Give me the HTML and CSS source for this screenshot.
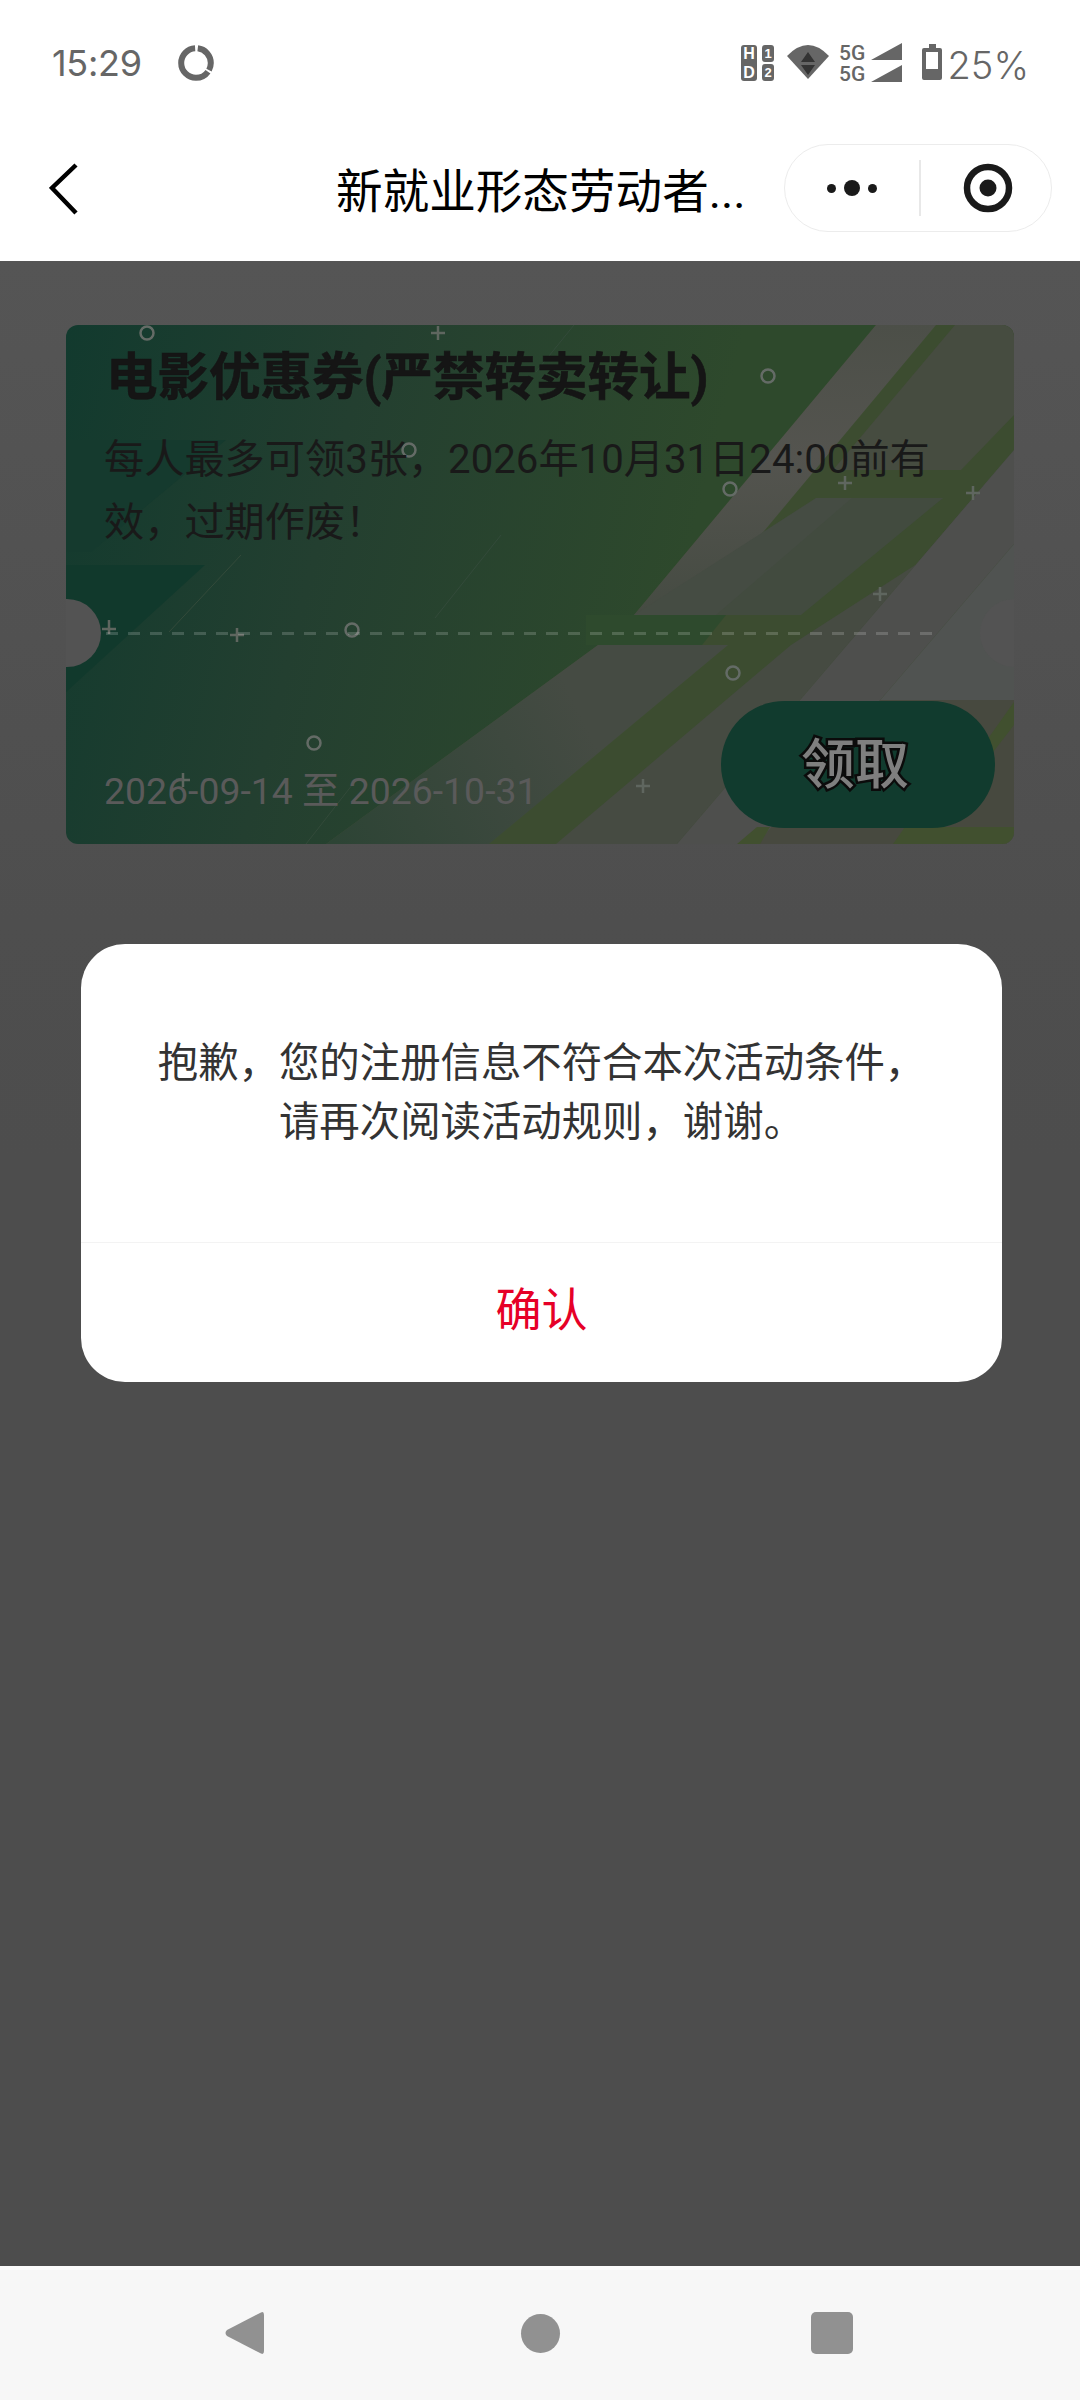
FILE: index.html
```html
<!DOCTYPE html>
<html lang="zh-CN">
<head>
<meta charset="utf-8">
<title>新就业形态劳动者</title>
<link rel="stylesheet" href="styles.css">
</head>
<body>
<div class="app">
  <header class="status">
    <div class="status-left">
      <span class="time">15:29</span>
      <svg class="spinner" viewBox="0 0 40 40"><circle cx="20" cy="20" r="14.8" pathLength="100" stroke-dasharray="64 3 31 2" stroke-dashoffset="-10"/></svg>
    </div>
    <div class="status-right">
      <svg class="ic ic-hd" viewBox="741 43 35 40">
        <rect class="fill" x="742" y="45" width="16" height="36" rx="3"/>
        <rect class="fill" x="763" y="45" width="12" height="17" rx="3"/>
        <rect class="fill" x="763" y="64" width="12" height="17" rx="3"/>
        <text class="glyph" x="750" y="59" font-size="16">H</text>
        <text class="glyph" x="750" y="78" font-size="16">D</text>
        <text class="glyph" x="769" y="58" font-size="13">1</text>
        <text class="glyph" x="769" y="77" font-size="13">2</text>
      </svg>
      <svg class="ic ic-wifi" viewBox="788 43 42 40">
        <path class="fill" d="M809 79 L788 56 Q809 34 830 56 Z"/>
        <path class="dark" d="M809 52 L802 62 H816 Z M809 75 L802 65 H816 Z"/>
      </svg>
      <svg class="ic-sig" viewBox="840 37 64 52">
        <text class="net" x="840" y="60">5G</text>
        <text class="net" x="840" y="81">5G</text>
        <path class="fill" d="M872 60 L903 43 V60 Z M872 82 L903 65 V82 Z"/>
      </svg>
      <svg class="ic ic-bat" viewBox="923 43 21 40">
        <path class="fill" d="M930 44 H937 V48 H941 Q943 48 943 50 V78 Q943 80 941 80 H925 Q923 80 923 78 V50 Q923 48 925 48 H930 Z"/>
        <rect class="hole" x="927" y="52" width="12" height="17"/>
      </svg>
      <span class="pct">25%</span>
    </div>
  </header>

  <nav class="nav">
    <svg class="back" viewBox="0 0 30 52"><path d="M27 2 L3 25 L27 50"/></svg>
    <div class="title">新就业形态劳动者...</div>
    <div class="capsule">
      <div class="cap-side cap-side-left">
        <span class="dot"></span><span class="dot dot-big"></span><span class="dot"></span>
      </div>
      <div class="cap-sep"></div>
      <div class="cap-side cap-side-right">
        <svg class="target" viewBox="0 0 50 50"><circle class="ring" cx="25" cy="25" r="21"/><circle class="core" cx="25" cy="25" r="8.5"/></svg>
      </div>
    </div>
  </nav>

  <main class="page">
    <section class="coupon">
      <svg class="coupon-bg" viewBox="0 0 948 519" preserveAspectRatio="none">
        <defs>
          <linearGradient id="base" gradientUnits="userSpaceOnUse" x1="0" y1="0" x2="640" y2="160">
            <stop offset="0" stop-color="#123a2e"/>
            <stop offset="0.45" stop-color="#233f30"/>
            <stop offset="1" stop-color="#2e492c"/>
          </linearGradient>
          <linearGradient id="lowerBlock" gradientUnits="userSpaceOnUse" x1="270" y1="519" x2="520" y2="400">
            <stop offset="0" stop-color="#2d4435"/>
            <stop offset="1" stop-color="#454b43"/>
          </linearGradient>
          <linearGradient id="topStripe" gradientUnits="userSpaceOnUse" x1="0" y1="0" x2="0" y2="290">
            <stop offset="0" stop-color="#4c4f48"/>
            <stop offset="0.45" stop-color="#54544f"/>
            <stop offset="1" stop-color="#454b42"/>
          </linearGradient>
        </defs>
        <rect width="948" height="519" fill="url(#base)"/>
        <path fill="#153a2e" d="M0 115 H160 L25 227 H0 Z"/>
        <path fill="#11392c" d="M0 240 H139 L0 367 Z"/>
        <path fill="#3c4c30" d="M810 0 H948 V519 H260 L532 320 L568 290 Z"/>
        <path fill="#2e4a2d" d="M520 290 H660 L636 320 H520 Z"/>
        <path fill="url(#topStripe)" d="M810 0 H870 L628 290 H568 Z"/>
        <path fill="#464c40" d="M889 0 H948 V90 L895 145 H767 Z"/>
        <path fill="#454c43" d="M750 173 H877 L701 290 H568 Z"/>
        <path fill="#424b3f" d="M786 173 H877 L735 290 H650 Z"/>
        <path fill="url(#lowerBlock)" d="M532 320 H662 L423 519 H260 Z"/>
        <path fill="#464b42" d="M490 519 H611 L948 125 L857 235 L725 320 Z"/>
        <path fill="#4e4f4d" d="M611 519 H691 L948 219 V125 Z"/>
        <path fill="#505351" d="M691 519 L948 219 V519 Z"/>
        <path fill="#47493f" d="M691 519 H948 V375 H814 Z"/>
        <path fill="#41502f" d="M827 519 H948 V502 H839 Z M671 519 H694 L704 502 H691 Z M948 377 L921 415 V435 L948 400 Z"/>
        <path class="hairline" d="M508 0 L470 47 M435 210 L369 293 M175 230 L103 307 M240 519 L290 455"/>
        <g transform="translate(-66 -325)">
          <g class="rings">
            <circle cx="147" cy="333" r="6.5"/><circle cx="409" cy="450" r="6.5"/>
            <circle cx="768" cy="376" r="6.5"/><circle cx="730" cy="489" r="6.5"/>
            <circle cx="352" cy="630" r="6.5"/><circle cx="314" cy="743" r="6.5"/>
            <circle cx="733" cy="673" r="6.5"/>
          </g>
          <path class="pluses" d="M431 333h14M438 326v14M838 483h14M845 476v14M966 493h14M973 486v14M102 629h14M109 620v14M230 635h14M237 628v14M176 780h14M183 773v14M873 594h14M880 587v14M636 786h14M643 779v14"/>
        </g>
      </svg>
      <span class="notch notch-left"></span>
      <span class="notch notch-right"></span>
      <div class="coupon-body">
        <h2 class="coupon-title">电影优惠券(严禁转卖转让)</h2>
        <p class="coupon-desc">每人最多可领3张，2026年10月31日24:00前有效，过期作废！</p>
        <div class="dash"></div>
        <div class="coupon-foot">
          <span class="dates">2026-09-14 至 2026-10-31</span>
          <button class="take" type="button">领取</button>
        </div>
      </div>
    </section>

    <div class="dialog">
      <div class="dialog-msg">抱歉，您的注册信息不符合本次活动条件，<br>请再次阅读活动规则，谢谢。</div>
      <div class="dialog-ok">确认</div>
    </div>
  </main>

  <footer class="sysnav">
    <svg class="sys-back" viewBox="0 0 39 44"><path d="M36 1.5 Q39 0 39 4 V40 Q39 44 36 42.5 L2 25 Q-1 22 2 19 Z"/></svg>
    <span class="sys-home"></span>
    <span class="sys-recent"></span>
  </footer>
</div>
</body>
</html>
```

FILE: styles.css
```css
* { box-sizing: border-box; }
html, body { margin: 0; padding: 0; }
body {
  width: 1080px;
  height: 2400px;
  overflow: hidden;
  background: #fff;
  font-family: Roboto, "Noto Sans CJK SC", sans-serif;
}
.app { display: flex; flex-direction: column; height: 2400px; }

/* status bar */
.status {
  height: 116px;
  padding: 40px 51px 0 52px;
  display: flex;
  justify-content: space-between;
  align-items: flex-start;
  background: #fff;
}
.status-left { display: flex; align-items: center; height: 46px; }
.time { font-family: Inter, sans-serif; font-size: 36px; color: #666; line-height: 46px; letter-spacing: -0.3px; }
.spinner { width: 40px; height: 40px; margin-left: 34px; margin-top: -1px; }
.spinner circle { fill: none; stroke: #666; stroke-width: 6; }
.status-right { display: flex; align-items: center; height: 40px; margin-top: 3px; }
.ic { height: 40px; display: block; }
.ic-hd { width: 35px; }
.ic-wifi { width: 42px; margin-left: 12px; }
.ic-sig { width: 64px; height: 52px; display: block; margin: -6px 0 -6px 10px; }
.ic-bat { width: 21px; margin-left: 19px; }
.fill { fill: #666; }
.dark { fill: #333; }
.hole { fill: #fff; }
.glyph { fill: #fff; font-family: "Liberation Sans", sans-serif; font-weight: 700; text-anchor: middle; }
.net { fill: #666; font-family: Roboto, sans-serif; font-size: 21px; font-weight: 500; }
.pct { font-family: Inter, sans-serif; font-weight: 300; font-size: 38px; color: #666; line-height: 40px; margin-left: 5px; margin-top: 4px; }

/* title bar */
.nav {
  height: 145px;
  position: relative;
  display: flex;
  align-items: flex-start;
  background: #fff;
}
.back { width: 30px; height: 52px; margin: 47px 0 0 49px; display: block; }
.back path { fill: none; stroke: #000; stroke-width: 4.5; }
.title {
  position: absolute;
  left: 336px;
  top: 46px;
  font-size: 46.6px;
  line-height: 60px;
  color: #000;
  white-space: nowrap;
}
.capsule {
  width: 268px;
  height: 88px;
  margin: 28px 28px 0 auto;
  border: 1.5px solid #ececec;
  border-radius: 44px;
  display: flex;
  align-items: center;
}
.cap-side { display: flex; align-items: center; justify-content: center; gap: 8px; }
.cap-side-left { width: 134px; }
.cap-side-right { flex: 1; padding-left: 5px; }
.cap-sep { width: 1.5px; height: 56px; background: #e8e8e8; }
.dot { width: 9px; height: 9px; border-radius: 50%; background: #1a1a1a; }
.dot-big { width: 16px; height: 16px; }
.target { width: 50px; height: 50px; display: block; }
.ring { fill: none; stroke: #1a1a1a; stroke-width: 6.5; }
.core { fill: #1a1a1a; }

/* page */
.page {
  flex: 1;
  position: relative;
  padding: 64px 66px 0;
  background: linear-gradient(#555 0, #4e4e4e 660px, #4d4d4d 900px);
}
.coupon { position: relative; height: 519px; border-radius: 12px; overflow: hidden; }
.coupon-bg { position: absolute; inset: 0; width: 100%; height: 100%; display: block; }
.hairline { fill: none; stroke: #334a3a; stroke-width: 1; }
.rings circle { fill: none; stroke: #646b66; stroke-width: 2.5; }
.pluses { fill: none; stroke: #5f665f; stroke-width: 2.5; }
.notch { position: absolute; top: 274px; width: 68px; height: 68px; border-radius: 50%; background: #535353; }
.notch-left { left: -33px; }
.notch-right { right: -34px; }
.coupon-body {
  position: relative;
  height: 100%;
  padding: 23px 19px 16px 38px;
  display: flex;
  flex-direction: column;
}
.coupon-title {
  margin: 0 0 0 2px;
  font-size: 51.5px;
  line-height: 60px;
  font-weight: 700;
  color: #151515;
  -webkit-text-stroke: 0.6px #151515;
}
.coupon-desc { margin: 20px 0 0; width: 840px; font-size: 40.2px; line-height: 63px; color: #191919; }
.dash {
  margin: 78px 0 0 2px;
  width: 830px;
  height: 3px;
  background: repeating-linear-gradient(90deg, rgba(255,255,255,.17) 0 12px, transparent 12px 22px);
}
.coupon-foot { margin-top: auto; display: flex; justify-content: space-between; align-items: flex-end; }
.dates { font-size: 37.4px; line-height: 50px; color: #5a5a5a; margin-bottom: 12px; white-space: nowrap; }
.take {
  width: 274px;
  height: 127px;
  border: 0;
  padding: 0 6px 8px 0;
  border-radius: 64px;
  background: #113b2e;
  font-family: "Noto Sans CJK SC", sans-serif;
  font-size: 54px;
  font-weight: 500;
  color: #7f7f7f;
  -webkit-text-stroke: 5px #0b0b0b;
  paint-order: stroke fill;
}

/* dialog */
.dialog {
  position: absolute;
  left: 81px;
  top: 683px;
  width: 921px;
  height: 438px;
  background: #fff;
  border-radius: 44px;
  display: flex;
  flex-direction: column;
}
.dialog-msg {
  height: 299px;
  padding-top: 86px;
  text-align: center;
  font-family: "Noto Sans CJK SC", sans-serif;
  font-size: 40.4px;
  line-height: 59px;
  color: #333;
  border-bottom: 1.5px solid #f3f3f3;
}
.dialog-ok {
  flex: 1;
  display: flex;
  align-items: center;
  justify-content: center;
  padding-bottom: 14px;
  font-family: "Noto Sans CJK SC", sans-serif;
  font-size: 46px;
  color: #e60027;
}

/* system navigation */
.sysnav {
  height: 134px;
  border-top: 4px solid #fcfcfc;
  background: #f7f7f7;
  padding: 41px 227px 0 225px;
  display: flex;
  justify-content: space-between;
  align-items: flex-start;
}
.sys-back { width: 39px; height: 44px; display: block; fill: #919191; }
.sys-home { width: 39px; height: 39px; margin: 3px 0 0 6px; border-radius: 50%; background: #919191; }
.sys-recent { width: 42px; height: 42px; margin-top: 1px; border-radius: 5px; background: #919191; }
```
